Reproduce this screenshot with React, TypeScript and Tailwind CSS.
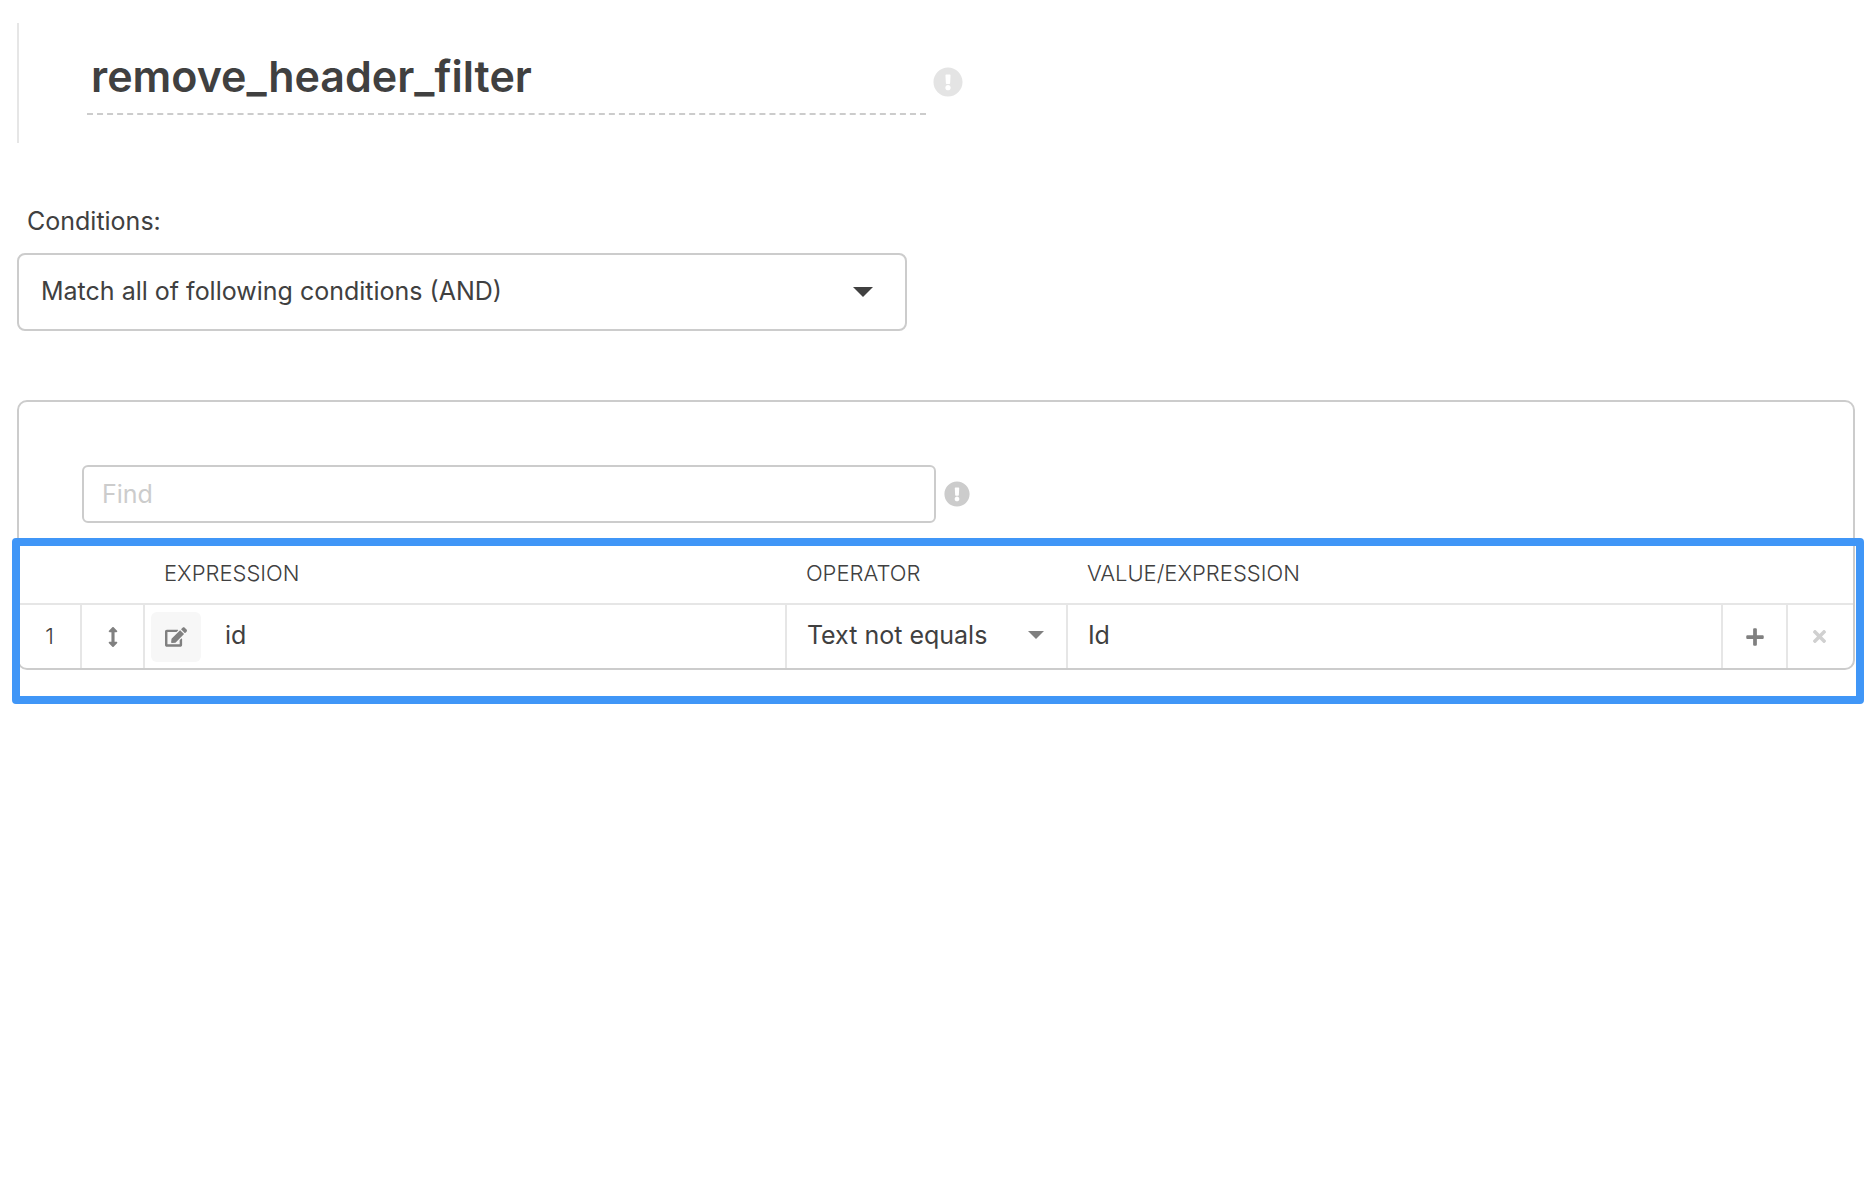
import { useState } from "react";
import {
  FaArrowsAltV,
  FaEdit,
  FaExclamationCircle,
  FaPlus,
  FaTimes,
} from "react-icons/fa";

interface Condition {
  expression: string;
  operator: string;
  value: string;
}

const MATCH_OPTIONS = [
  "Match all of following conditions (AND)",
  "Match any of following conditions (OR)",
];

const OPERATORS = ["Text not equals", "Text equals"];

function Caret({ className }: { readonly className: string }) {
  return (
    <svg
      viewBox="0 0 20 10"
      fill="currentColor"
      aria-hidden="true"
      className={`pointer-events-none absolute ${className}`}
    >
      <path d="M0 0h20L10 10z" />
    </svg>
  );
}

function ConditionRow({
  index,
  condition,
}: {
  readonly index: number;
  readonly condition: Condition;
}) {
  return (
    <tr className="h-16 border-t-2 border-[#e6e6e6] text-[25px]">
      <td className="border-r-2 border-[#e6e6e6] text-center text-[22px] font-light">
        {index}
      </td>
      <td className="border-r-2 border-[#e6e6e6]">
        <button
          type="button"
          aria-label="Move row"
          className="flex w-full justify-center text-[#808080]"
        >
          <FaArrowsAltV size={20} />
        </button>
      </td>
      <td className="border-r-2 border-[#e6e6e6]">
        <div className="flex items-center gap-6 pl-1.5">
          <button
            type="button"
            aria-label="Edit expression"
            className="flex size-[50px] shrink-0 items-center justify-center rounded-md bg-[#f7f7f7] text-[#808080]"
          >
            <FaEdit size={22} />
          </button>
          <input
            aria-label="Expression"
            defaultValue={condition.expression}
            className="w-full min-w-0 pb-0.5 outline-none"
          />
        </div>
      </td>
      <td className="border-r-2 border-[#e6e6e6]">
        <div className="relative">
          <select
            aria-label="Operator"
            defaultValue={condition.operator}
            className="w-full appearance-none pb-0.5 pl-5 outline-none"
          >
            {OPERATORS.map((operator) => (
              <option key={operator}>{operator}</option>
            ))}
          </select>
          <Caret className="top-3.5 right-[22px] h-2 w-4 text-[#808080]" />
        </div>
      </td>
      <td className="border-r-2 border-[#e6e6e6]">
        <input
          aria-label="Value"
          defaultValue={condition.value}
          className="w-full pb-0.5 pl-5 outline-none"
        />
      </td>
      <td className="border-r-2 border-[#e6e6e6]">
        <button
          type="button"
          aria-label="Add row"
          className="flex w-full justify-center text-[#808080]"
        >
          <FaPlus size={20} />
        </button>
      </td>
      <td>
        <button
          type="button"
          aria-label="Remove row"
          className="flex w-full justify-center pr-0.5 text-[#d0d0d0]"
        >
          <FaTimes size={19} />
        </button>
      </td>
    </tr>
  );
}

export default function App() {
  const [name, setName] = useState("remove_header_filter");
  const conditions: Condition[] = [
    { expression: "id", operator: "Text not equals", value: "Id" },
  ];

  return (
    <main className="min-h-screen bg-white px-[17px] pt-[23px] font-['Inter',sans-serif] text-[25px] text-[#404040]">
      <header className="flex h-30 items-start gap-[7px] border-l-2 border-[#e6e6e6] pt-6 pl-17">
        <input
          aria-label="Name"
          value={name}
          onChange={(e) => setName(e.target.value)}
          className="h-17 w-full max-w-[839px] border-b-2 border-dashed border-[#cccccc] pb-2 pl-1 text-[43px] font-semibold outline-none"
        />
        <FaExclamationCircle size={30} className="mt-5 shrink-0 text-[#e4e4e4]" />
      </header>

      <section className="mt-[58px]">
        <label htmlFor="match" className="block pl-2.5 leading-10">
          Conditions:
        </label>
        <div className="relative mt-3 max-w-[890px]">
          <select
            id="match"
            className="h-[78px] w-full appearance-none rounded-lg border-2 border-[#cccccc] pl-[22px] outline-none"
          >
            {MATCH_OPTIONS.map((option) => (
              <option key={option}>{option}</option>
            ))}
          </select>
          <Caret className="top-[34px] right-[34px] h-2.5 w-5" />
        </div>
      </section>

      <section className="mt-[69px] rounded-[10px] border-2 border-[#cccccc]">
        <div className="flex items-center gap-2 pt-[63px] pl-[63px]">
          <input
            type="search"
            aria-label="Find"
            placeholder="Find"
            className="h-[58px] w-full max-w-[854px] rounded-md border-2 border-[#cccccc] pl-[18px] outline-none placeholder:text-[#cccccc]"
          />
          <FaExclamationCircle size={26} className="shrink-0 text-[#cccccc]" />
        </div>

        <div className="relative mt-6">
          <table className="w-full table-fixed border-collapse">
            <colgroup>
              <col className="w-[62px]" />
              <col className="w-[63px]" />
              <col className="w-[35%]" />
              <col className="w-[281px]" />
              <col />
              <col className="w-[65px]" />
              <col className="w-[66px]" />
            </colgroup>
            <thead>
              <tr className="h-[57px] text-left text-[22px]">
                <td />
                <td />
                <th className="pb-1 pl-5 font-light">EXPRESSION</th>
                <th className="pb-1 pl-5 font-light">OPERATOR</th>
                <th className="pb-1 pl-5 font-light">VALUE/EXPRESSION</th>
                <td />
                <td />
              </tr>
            </thead>
            <tbody>
              {conditions.map((condition, i) => (
                <ConditionRow key={i} index={i + 1} condition={condition} />
              ))}
            </tbody>
          </table>
          <div className="pointer-events-none absolute -top-[9px] -right-[11px] -bottom-9 -left-[7px] rounded border-8 border-[#4096f7]" />
        </div>
      </section>
    </main>
  );
}
